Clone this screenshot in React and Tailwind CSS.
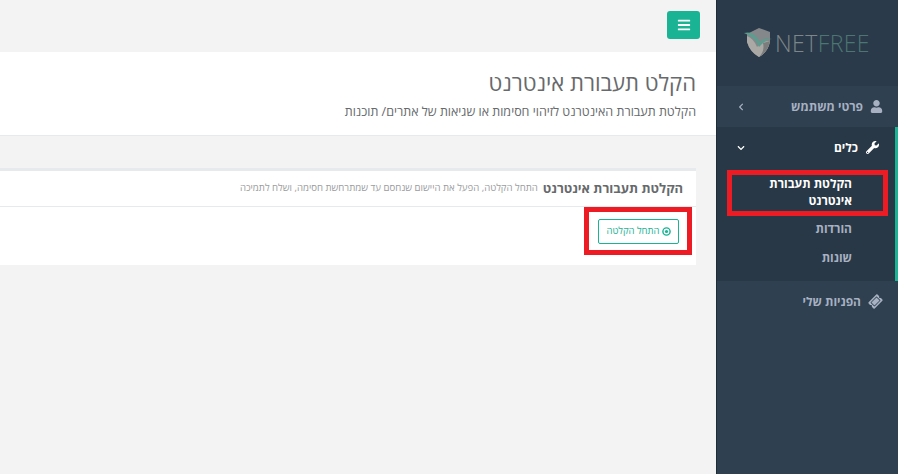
import { FaUser, FaWrench, FaTicketAlt, FaBars, FaChevronLeft, FaChevronDown } from "react-icons/fa";

function Logo() {
  return (
    <div className="flex items-center justify-center gap-[3px]" dir="ltr">
      <svg width="28" height="30" viewBox="0 0 28 30">
        <path d="M3 6 L15 0 L26 4 L26 14 Q24 24 15 29 Q6 24 3 14 Z" fill="#85888a" />
        <path d="M3 8 Q10 11 13 19 Q19 12 26 13 Q24 24 15 29 Q6 24 3 14 Z" fill="#aaa9a5" />
        <path d="M19 15 Q23 14 26 13 Q24 24 15 29 Q21 23 19 15 Z" fill="#7b7d7d" />
        <path d="M0 5 Q10 2 16 14 Q20 9 28 11 Q22 11 15 19 Q11 9 0 5 Z" fill="#5d9c8e" />
      </svg>
      <span className="text-[23px] leading-none font-light tracking-[0.4px] text-[#7d8789]">
        NET<span className="text-[#4c7672]">FREE</span>
      </span>
    </div>
  );
}

function Sidebar() {
  return (
    <aside className="flex w-[182px] shrink-0 flex-col border-l border-[#1f2b36] bg-[#2f4050]">
      <div className="flex h-[86px] items-center justify-center bg-[#2a3a4a] pr-[1px]">
        <Logo />
      </div>

      <div className="flex h-[41px] items-center pr-[15px] pl-[20px] text-[12px] font-bold text-[#a7b1c2]">
        <FaUser className="ml-[7px] text-[13px]" />
        <span>פרטי משתמש</span>
        <FaChevronLeft className="mr-auto text-[8px]" />
      </div>

      <div className="relative h-[154px] border-r-[3px] border-[#1ab394] bg-[#293846]">
        <div className="flex h-[41px] items-center pr-[16px] pl-[20px] text-[12px] font-bold text-white">
          <FaWrench className="ml-[8px] text-[13px]" />
          <span>כלים</span>
          <FaChevronDown className="mr-auto text-[8px]" />
        </div>
        <div className="pt-[7px] pr-[43px] text-[12px] leading-[17px] font-bold text-[#a7b1c2]">
          <div className="text-white">
            הקלטת תעבורת
            <br />
            אינטרנט
          </div>
          <div className="mt-[11px]">הורדות</div>
          <div className="mt-[12px]">שונות</div>
        </div>
        <div className="absolute top-[43px] left-[10px] h-[46px] w-[161px] border-[5px] border-[#ed1c24]" />
      </div>

      <div className="flex h-[41px] items-center pr-[16px] text-[12px] font-bold text-[#a7b1c2]">
        <FaTicketAlt className="ml-[8px] -rotate-45 text-[13px]" />
        <span>הפניות שלי</span>
      </div>
    </aside>
  );
}

function Main() {
  return (
    <main className="min-w-0 flex-1">
      <div className="h-[52px] pt-[11px] pr-[16px]">
        <button className="flex h-[28px] w-[33px] items-center justify-center rounded-[3px] bg-[#1ab394] text-[14px] text-white">
          <FaBars />
        </button>
      </div>

      <div className="h-[84px] border-b border-[#e7eaec] bg-white pt-[18px] pr-[20px]">
        <h2 className="text-[22px] leading-[24px] font-normal text-[#676a6c]">הקלט תעבורת אינטרנט</h2>
        <p className="mt-[9px] text-[12.5px] leading-[17px] text-[#676a6c]">
          הקלטת תעבורת האינטרנט לזיהוי חסימות או שגיאות של אתרים/ תוכנות
        </p>
      </div>

      <div className="mt-[32px] mr-[20px] h-[97px] border-t-[3px] border-[#e7eaec] bg-white">
        <div className="flex h-[36px] items-center gap-[5px] border-b border-[#e7eaec] px-[13px]">
          <h5 className="text-[13px] font-bold text-[#676a6c]">הקלטת תעבורת אינטרנט</h5>
          <span className="text-[9.6px] text-[#9a9c9e]">התחל הקלטה, הפעל את היישום שנחסם עד שמתרחשת חסימה, ושלח לתמיכה</span>
        </div>
        <div className="relative pt-[12px] pr-[17px]">
          <button className="flex h-[25px] w-[81px] items-center justify-center gap-[2px] rounded-[2px] border border-[#1ab394] bg-white text-[9.5px] text-[#1ab394]">
            <svg width="9" height="9" viewBox="0 0 10 10" className="shrink-0">
              <circle cx="5" cy="5" r="4" fill="none" stroke="currentColor" strokeWidth="1.6" />
              <circle cx="5" cy="5" r="1.8" fill="currentColor" />
            </svg>
            התחל הקלטה
          </button>
          <div className="absolute top-0 right-[4px] h-[48px] w-[108px] border-[5px] border-[#ed1c24]" />
        </div>
      </div>
    </main>
  );
}

export default function App() {
  return (
    <div
      dir="rtl"
      className="flex h-[474px] w-[898px] overflow-hidden bg-[#f3f3f4] font-['Open_Sans','Noto_Sans','Liberation_Sans',sans-serif]"
    >
      <Sidebar />
      <Main />
    </div>
  );
}
